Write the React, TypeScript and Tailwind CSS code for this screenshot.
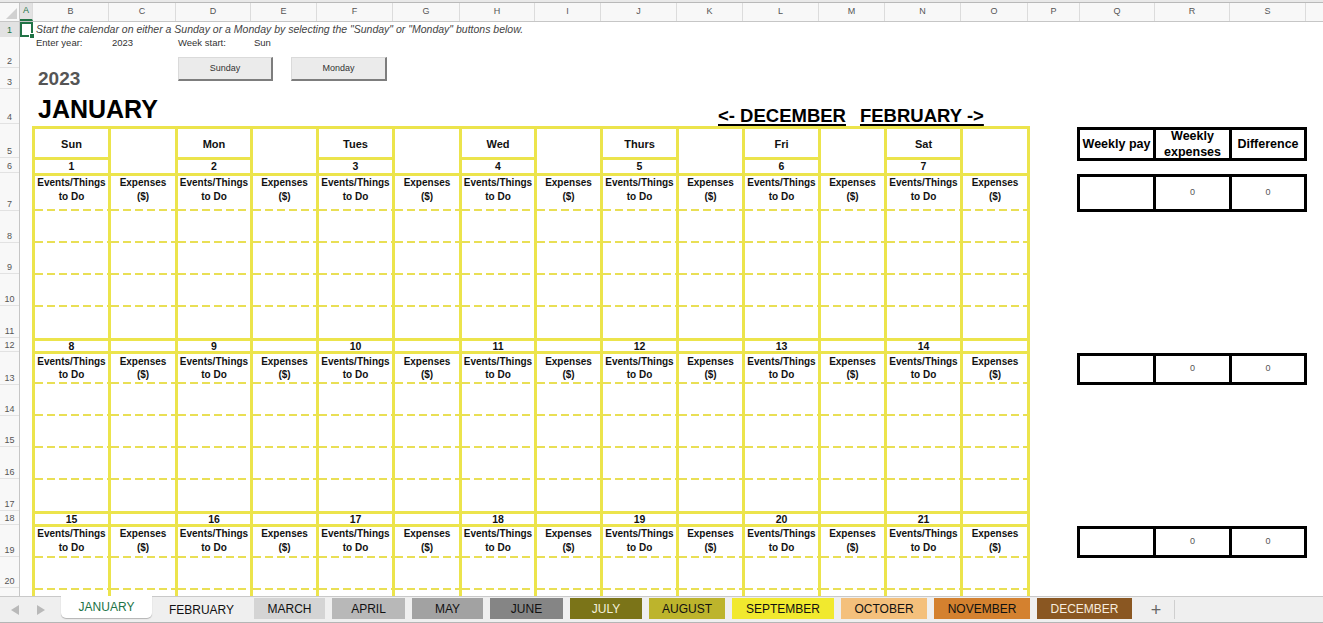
import React from 'react';

// column widths of B..O (day / expenses pairs), border included
const COLS = [
  'w-[76px]', 'w-[67px]', 'w-[75px]', 'w-[66px]', 'w-[76px]', 'w-[67px]', 'w-[75px]',
  'w-[66px]', 'w-[76px]', 'w-[66px]', 'w-[76px]', 'w-[66px]', 'w-[76px]', 'w-[67px]',
];

const DAYS = ['Sun', 'Mon', 'Tues', 'Wed', 'Thurs', 'Fri', 'Sat'];

const HEAD = [
  ['A', 'w-[13px]'], ['B', 'w-[76px]'], ['C', 'w-[67px]'], ['D', 'w-[75px]'], ['E', 'w-[66px]'],
  ['F', 'w-[76px]'], ['G', 'w-[67px]'], ['H', 'w-[75px]'], ['I', 'w-[66px]'], ['J', 'w-[76px]'],
  ['K', 'w-[66px]'], ['L', 'w-[76px]'], ['M', 'w-[66px]'], ['N', 'w-[76px]'], ['O', 'w-[67px]'],
  ['P', 'w-[52px]'], ['Q', 'w-[75px]'], ['R', 'w-[75px]'], ['S', 'w-[76px]'],
];

const ROWS = [
  ['1', 'h-[15px]'], ['2', 'h-[31px]'], ['3', 'h-[21px]'], ['4', 'h-[35px]'], ['5', 'h-[34px]'],
  ['6', 'h-[15px]'], ['7', 'h-[38px]'], ['8', 'h-[32px]'], ['9', 'h-[31px]'], ['10', 'h-[32px]'],
  ['11', 'h-[32px]'], ['12', 'h-[14px]'], ['13', 'h-[33px]'], ['14', 'h-[31px]'], ['15', 'h-[31px]'],
  ['16', 'h-[32px]'], ['17', 'h-[32px]'], ['18', 'h-[14px]'], ['19', 'h-[32px]'], ['20', 'h-[31px]'],
  ['21', 'h-[31px]'],
];

const TABS = [
  { name: 'MARCH', w: 'w-[71px]', c: 'bg-[#d4d4d4] text-[#111]' },
  { name: 'APRIL', w: 'w-[73px]', c: 'bg-[#b8b8b8] text-[#111]' },
  { name: 'MAY', w: 'w-[71px]', c: 'bg-[#a2a2a2] text-[#111]' },
  { name: 'JUNE', w: 'w-[73px]', c: 'bg-[#858585] text-[#111]' },
  { name: 'JULY', w: 'w-[72px]', c: 'bg-[#7b7418] text-[#f4f1dc]' },
  { name: 'AUGUST', w: 'w-[76px]', c: 'bg-[#bdb42c] text-[#111]' },
  { name: 'SEPTEMBER', w: 'w-[102px]', c: 'bg-[#f1e92e] text-[#111]' },
  { name: 'OCTOBER', w: 'w-[86px]', c: 'bg-[#f4c07c] text-[#111]' },
  { name: 'NOVEMBER', w: 'w-[96px]', c: 'bg-[#d4812f] text-[#111]' },
  { name: 'DECEMBER', w: 'w-[95px]', c: 'bg-[#8a5722] text-[#f6ecdf]' },
];

function Dash() {
  return (
    <div className="h-[2px] shrink-0 bg-[repeating-linear-gradient(to_right,#e9df55_0px,#e9df55_8px,transparent_8px,transparent_12px)]" />
  );
}

function FirstWeekHead() {
  return (
    <div className="flex">
      {COLS.map((w, i) =>
        i % 2 === 0 ? (
          <div key={i} className={`${w} shrink-0 border-r-[3px] border-[#ece44c] flex flex-col`}>
            <div className="h-[31px] pt-[2px] border-b-[3px] border-[#ece44c] flex items-center justify-center text-[11px] font-bold">
              {DAYS[i / 2]}
            </div>
            <div className="h-[16px] border-b-[3px] border-[#ece44c] flex items-center justify-center text-[10.5px] font-bold leading-none">
              {i / 2 + 1}
            </div>
          </div>
        ) : (
          <div key={i} className={`${w} h-[47px] shrink-0 border-r-[3px] border-b-[3px] border-[#ece44c]`} />
        )
      )}
    </div>
  );
}

function DateRow({ start }: { start: number }) {
  return (
    <div className="flex h-[13px]">
      {COLS.map((w, i) => (
        <div
          key={i}
          className={`${w} shrink-0 border-r-[3px] border-b-[3px] border-[#ece44c] flex items-center justify-center text-[10.5px] font-bold leading-none`}
        >
          {i % 2 === 0 ? start + i / 2 : ''}
        </div>
      ))}
    </div>
  );
}

function LabelRow({ h, lead }: { h: string; lead: string }) {
  return (
    <div className={`flex ${h}`}>
      {COLS.map((w, i) => (
        <div key={i} className={`${w} shrink-0 border-r-[3px] border-[#ece44c] flex flex-col`}>
          <div className={`flex-1 text-center text-[10px] font-bold overflow-hidden ${lead}`}>
            {i % 2 === 0 ? (
              <>
                Events/Things
                <br />
                to Do
              </>
            ) : (
              <>
                Expenses
                <br />
                ($)
              </>
            )}
          </div>
          <Dash />
        </div>
      ))}
    </div>
  );
}

function EmptyRow({ last }: { last?: boolean }) {
  return (
    <div className={`flex ${last ? 'h-[34px]' : 'h-[32px]'}`}>
      {COLS.map((w, i) =>
        last ? (
          <div key={i} className={`${w} shrink-0 border-r-[3px] border-b-[3px] border-[#ece44c]`} />
        ) : (
          <div key={i} className={`${w} shrink-0 border-r-[3px] border-[#ece44c] flex flex-col`}>
            <div className="flex-1" />
            <Dash />
          </div>
        )
      )}
    </div>
  );
}

function PayRow({ h, mt }: { h: string; mt: string }) {
  return (
    <div className={`flex w-[230px] border-[3px] border-black ${h} ${mt}`}>
      <div className="w-[76px] border-r-[3px] border-black" />
      <div className="w-[76px] border-r-[3px] border-black flex items-center justify-center text-[9px] text-[#555]">0</div>
      <div className="flex-1 flex items-center justify-center text-[9px] text-[#555]">0</div>
    </div>
  );
}

export default function App() {
  return (
    <div className="w-[1323px] h-[623px] overflow-hidden flex flex-col bg-white text-[#111] font-['Liberation_Sans',Arial,sans-serif]">
      {/* toolbar edge */}
      <div className="h-[3px] shrink-0 bg-[#e9e9e9] border-b border-[#b9b9b9]" />

      {/* column letters */}
      <div className="h-[19px] shrink-0 flex bg-[#f8f8f8] border-b border-[#c6c6c6]">
        <div className="w-[20px] shrink-0 border-r border-[#c6c6c6] flex items-end justify-end pr-[2px] pb-[2px]">
          <svg width="11" height="11" viewBox="0 0 11 11">
            <polygon points="11,0 11,11 0,11" fill="#d0d0d0" />
          </svg>
        </div>
        {HEAD.map(([l, w]) => (
          <div
            key={l}
            className={`${w} shrink-0 border-r border-[#dcdcdc] flex items-center justify-center text-[9px] ${
              l === 'A' ? 'bg-[#e2e2e2] text-[#217346] border-b-2 border-b-[#217346]' : 'text-[#555]'
            }`}
          >
            {l}
          </div>
        ))}
        <div className="flex-1" />
      </div>

      <div className="flex-1 flex overflow-hidden">
        {/* row numbers */}
        <div className="w-[20px] shrink-0 flex flex-col bg-[#f8f8f8] border-r border-[#c6c6c6]">
          {ROWS.map(([n, h]) => (
            <div
              key={n}
              className={`${h} shrink-0 border-b border-[#e2e2e2] flex items-end justify-center text-[9px] leading-[11px] ${
                n === '1' ? 'bg-[#e2e2e2] text-[#217346]' : 'text-[#555]'
              }`}
            >
              {n}
            </div>
          ))}
        </div>

        {/* sheet */}
        <div className="flex-1 flex flex-col overflow-hidden">
          <div className="h-[15px] shrink-0 flex">
            <div className="w-[13px] h-[15px] shrink-0 border-2 border-[#217346] relative">
              <div className="absolute -right-[4px] -bottom-[4px] w-[6px] h-[6px] bg-[#217346] border border-white" />
            </div>
            <div className="ml-[3px] text-[10.5px] leading-[15px] italic text-[#444] whitespace-nowrap">
              Start the calendar on either a Sunday or a Monday by selecting the "Sunday" or "Monday" buttons below.
            </div>
          </div>

          <div className="h-[87px] shrink-0 flex flex-col">
            <div className="h-[13px] flex items-center pl-[16px] text-[9.5px] text-[#333]">
              <span className="w-[76px]">Enter year:</span>
              <span className="w-[66px]">2023</span>
              <span className="w-[76px]">Week start:</span>
              <span>Sun</span>
            </div>
            <div className="flex-1 flex pl-[18px]">
              <div className="w-[140px] shrink-0 flex flex-col">
                <div className="mt-[18px] text-[19px] leading-[22px] font-bold text-[#555]">2023</div>
                <div className="mt-[4px] text-[25px] leading-[30px] font-bold text-black">JANUARY</div>
              </div>
              <button className="mt-[7px] w-[95px] h-[24px] shrink-0 bg-[#ebebeb] border border-[#dadada] border-r-2 border-b-2 border-r-[#7d7d7d] border-b-[#7d7d7d] text-[9px] text-[#333] flex items-center justify-center">
                Sunday
              </button>
              <button className="mt-[7px] ml-[18px] w-[96px] h-[24px] shrink-0 bg-[#ebebeb] border border-[#dadada] border-r-2 border-b-2 border-r-[#7d7d7d] border-b-[#7d7d7d] text-[9px] text-[#333] flex items-center justify-center">
                Monday
              </button>
              <div className="ml-[331px] mt-[55px] h-[22px] flex text-[18.5px] leading-[22px] font-bold text-black whitespace-nowrap">
                <span className="underline decoration-2 underline-offset-2">&lt;- DECEMBER</span>
                <span className="ml-[14px] underline decoration-2 underline-offset-2">FEBRUARY -&gt;</span>
              </div>
            </div>
          </div>

          <div className="flex items-start">
            {/* calendar */}
            <div className="ml-[12px] mt-[2px] shrink-0 flex flex-col border-l-[3px] border-t-[3px] border-[#ece44c]">
              <FirstWeekHead />
              <LabelRow h="h-[35px]" lead="leading-[14px]" />
              <EmptyRow />
              <EmptyRow />
              <EmptyRow />
              <EmptyRow last />

              <DateRow start={8} />
              <LabelRow h="h-[30px]" lead="leading-[13px] pt-[1px]" />
              <EmptyRow />
              <EmptyRow />
              <EmptyRow />
              <EmptyRow last />

              <DateRow start={15} />
              <LabelRow h="h-[31px]" lead="leading-[14px]" />
              <EmptyRow />
              <EmptyRow />
            </div>

            {/* weekly pay table */}
            <div className="ml-[47px] shrink-0 flex flex-col">
              <div className="mt-[3px] flex w-[230px] h-[34px] border-[3px] border-black text-[12.5px] font-bold text-black">
                <div className="w-[76px] border-r-[3px] border-black flex items-center justify-center whitespace-nowrap">
                  Weekly pay
                </div>
                <div className="w-[76px] border-r-[3px] border-black flex items-center justify-center text-center leading-[16px]">
                  Weekly
                  <br />
                  expenses
                </div>
                <div className="flex-1 flex items-center justify-center">Difference</div>
              </div>
              <PayRow h="h-[38px]" mt="mt-[13px]" />
              <PayRow h="h-[32px]" mt="mt-[141px]" />
              <PayRow h="h-[32px]" mt="mt-[141px]" />
            </div>
          </div>
        </div>
      </div>

      {/* sheet tabs */}
      <div className="h-[27px] shrink-0 flex bg-[#efefef] border-t border-[#c9c9c9] border-b border-b-[#b5b5b5] text-[12px]">
        <div className="w-[61px] shrink-0 flex items-center pl-[11px] gap-[18px]">
          <svg width="8" height="10" viewBox="0 0 8 10">
            <polygon points="8,0 8,10 0,5" fill="#b9b9b9" />
          </svg>
          <svg width="8" height="10" viewBox="0 0 8 10">
            <polygon points="0,0 0,10 8,5" fill="#b9b9b9" />
          </svg>
        </div>
        <div className="w-[91px] shrink-0 -mt-px mb-[4px] bg-white rounded-b-[5px] shadow-[0_1px_1px_rgba(0,0,0,0.25)] flex items-center justify-center text-[#217346]">
          JANUARY
        </div>
        <div className="w-[99px] shrink-0 flex items-center justify-center text-[#111]">FEBRUARY</div>
        <div className="ml-[3px] flex gap-[7px] pt-[1px] pb-[3px]">
          {TABS.map((t) => (
            <div key={t.name} className={`${t.w} ${t.c} shrink-0 flex items-center justify-center`}>
              {t.name}
            </div>
          ))}
        </div>
        <div className="ml-[12px] w-[24px] flex items-center justify-center text-[18px] text-[#666] leading-none">+</div>
        <div className="ml-[6px] my-[3px] w-px bg-[#cfcfcf]" />
      </div>
    </div>
  );
}
